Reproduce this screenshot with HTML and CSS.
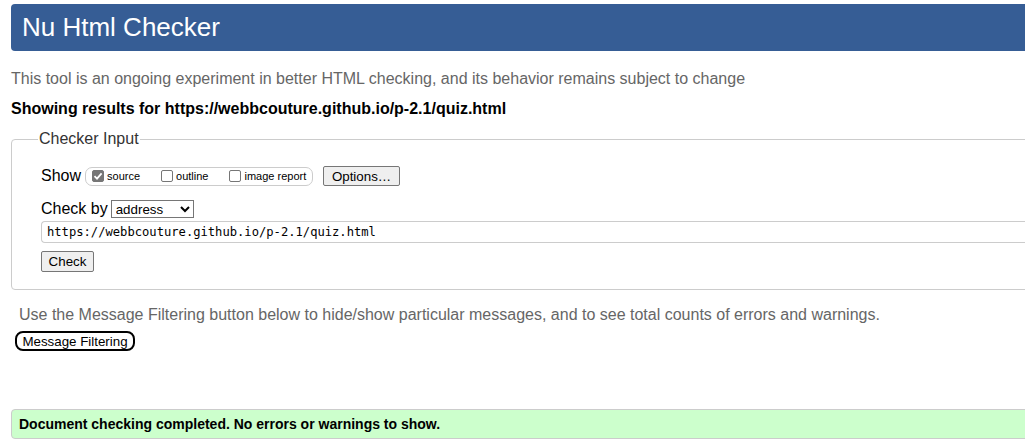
FILE: index.html
```html
<!DOCTYPE html>
<html>
<head>
<meta charset="utf-8">
<link rel="stylesheet" href="styles.css">
<title>Nu Html Checker</title>
</head>
<body>
<div class="page">
  <h1 class="banner">Nu Html Checker</h1>
  <p class="intro">This tool is an ongoing experiment in better HTML checking, and its behavior remains subject to change</p>
  <p class="showing">Showing results for https://webbcouture.github.io/p-2.1/quiz.html</p>
  <fieldset class="checker">
    <legend>Checker Input</legend>
    <div class="row show-row">
      <span class="lbl">Show</span>
      <span class="group">
        <label class="opt"><input class="cb" type="checkbox" checked disabled>source</label>
        <label class="opt"><input class="cb" type="checkbox">outline</label>
        <label class="opt"><input class="cb" type="checkbox">image report</label>
      </span>
      <button class="btn options">Options…</button>
    </div>
    <div class="row by-row">
      <span class="lbl">Check by</span>
      <select class="sel"><option>address</option><option>file upload</option><option>text input</option></select>
    </div>
    <div class="url">https://webbcouture.github.io/p-2.1/quiz.html</div>
    <button class="btn check">Check</button>
  </fieldset>
  <p class="filter-note">Use the Message Filtering button below to hide/show particular messages, and to see total counts of errors and warnings.</p>
  <button class="filter-btn">Message Filtering</button>
  <p class="success">Document checking completed. No errors or warnings to show.</p>
</div>
</body>
</html>
```
FILE: styles.css
```css
html, body {
  margin: 0;
  padding: 0;
  overflow: hidden;
  background: #fff;
}
body {
  font-family: "Liberation Sans", Arial, sans-serif;
  color: #000;
}
.page {
  width: 1060px;
  padding: 4px 0 0 11px;
}
.banner {
  margin: 0;
  height: 47px;
  box-sizing: border-box;
  background: #365d95;
  color: #fff;
  font-weight: normal;
  font-size: 26px;
  line-height: 47px;
  padding-left: 11px;
  border-radius: 4px;
}
.intro {
  margin: 18px 0 0 0;
  font-size: 16px;
  line-height: 20px;
  color: #666;
}
.showing {
  margin: 10px 0 0 0;
  font-size: 16px;
  line-height: 20px;
  font-weight: bold;
}
.checker {
  margin: 10px 0 0 0;
  padding: 8px 0 17px 29px;
  border: 1px solid #ccc;
  border-radius: 4px;
  min-width: 0;
}
.checker legend {
  font-size: 16px;
  color: #333;
  padding: 0 1px;
  line-height: 20px;
  margin-left: -3px;
}
.row {
  display: flex;
  align-items: center;
  font-size: 16px;
}
.show-row {
  margin-top: 8px;
  height: 22px;
}
.lbl {
  margin-right: 4px;
}
.group {
  display: inline-flex;
  align-items: center;
  border: 1px solid #ccc;
  border-radius: 7px;
  height: 19px;
  width: 228px;
  box-sizing: border-box;
  padding: 0 0 0 6px;
  font-size: 11px;
}
.opt {
  display: inline-flex;
  align-items: center;
  margin-right: 21px;
}
.opt:last-child {
  margin-right: 0;
}
.cb {
  appearance: none;
  -webkit-appearance: none;
  margin: 0 3px 0 0;
  width: 12px;
  height: 12px;
  box-sizing: border-box;
  border: 1px solid #767676;
  border-radius: 2px;
  background: #fff;
}
.cb:checked {
  background-color: #767676;
  background-image: url("data:image/svg+xml,%3Csvg xmlns='http://www.w3.org/2000/svg' viewBox='0 0 12 12'%3E%3Cpath d='M2.5 6.2 L5 8.6 L9.6 3.4' fill='none' stroke='white' stroke-width='1.8'/%3E%3C/svg%3E");
  background-size: 12px 12px;
  background-position: -1px -1px;
}
.btn {
  font-family: "Liberation Sans", Arial, sans-serif;
  font-size: 13.33px;
  background: #efefef;
  border: 1px solid #767676;
  border-radius: 2px;
  color: #000;
  padding: 0 6px;
  height: 21px;
}
.options {
  margin-left: 10px;
  width: 77px;
  height: 20px;
}
.by-row {
  margin-top: 11px;
  height: 22px;
}
.sel {
  margin-left: -1px;
  font-family: "Liberation Sans", Arial, sans-serif;
  font-size: 13.33px;
  height: 18px;
  width: 83px;
  border: 1px solid #767676;
  border-radius: 0;
  background: #fff;
  color: #000;
  padding: 0;
}
.url {
  margin-top: 1px;
  height: 22px;
  box-sizing: border-box;
  border: 1px solid #ccc;
  border-radius: 4px 0 0 4px;
  border-right: none;
  font-family: "DejaVu Sans Mono", "Liberation Mono", monospace;
  font-size: 12.15px;
  line-height: 20px;
  padding-left: 5px;
}
.check {
  margin-top: 8px;
  width: 53px;
  height: 21px;
  display: block;
}
.filter-note {
  margin: 15px 0 0 8px;
  font-size: 16px;
  line-height: 20px;
  color: #666;
}
.filter-btn {
  margin: 6px 0 0 4px;
  display: block;
  font-family: "Liberation Sans", Arial, sans-serif;
  font-size: 13.33px;
  height: 20px;
  width: 120px;
  padding: 0;
  background: #fff;
  border: 2px solid #000;
  border-radius: 8px;
  color: #000;
}
.success {
  margin: 58px 0 0 0;
  height: 30px;
  box-sizing: border-box;
  background: #ccffcc;
  border: 1px solid #ccc;
  border-radius: 4px;
  font-weight: bold;
  font-size: 14px;
  line-height: 28px;
  padding-left: 7px;
}
```
